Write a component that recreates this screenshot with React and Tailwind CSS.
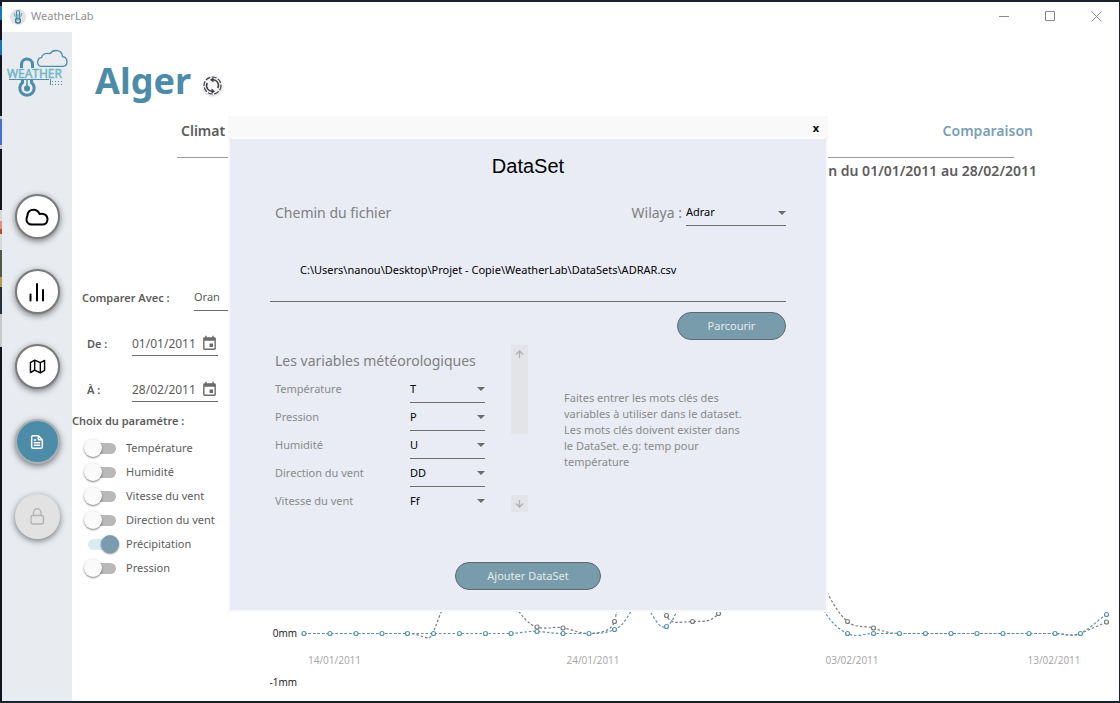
import React from "react";
import { MdEvent } from "react-icons/md";

function Caret({ className = "" }) {
  return (
    <svg viewBox="0 0 8 4" className={"pointer-events-none absolute right-0 h-1 w-2 fill-[#6b6b6b] " + className} aria-hidden="true">
      <path d="M0 0h8L4 4z" />
    </svg>
  );
}

function ThermoLogo() {
  return (
    <svg viewBox="0 0 62 50" className="h-[50px] w-[62px]" role="img" aria-label="WeatherLab">
      <g fill="none" stroke="#4d8ca9" strokeWidth="3">
        <path d="M15.500 20v-3.500a5.500 5.500 0 0 1 11 0V20" />
        <path d="M16.500 32v2.500a7.200 7.200 0 1 0 9 0V32" />
        <circle cx="21" cy="40.500" r="3" fill="#4d8ca9" stroke="none" />
        <path d="M21 32v8" strokeWidth="1.500" />
      </g>
      <path
        d="M35 18.300A4 4 0 0 1 32 12.500C32.500 10.500 34 9.700 35.500 9.700C36 6.500 39.500 4.500 44 5.600 47.500.8 56 1.500 56.500 8.600 62.500 9.500 62 17.500 57.500 18.300z"
        fill="none"
        stroke="#4d8ca9"
        strokeWidth="1.300"
      />
      <text x="1" y="30" fontSize="12" fontFamily="Open Sans, sans-serif" fill="#6fb7c7" stroke="#6fb7c7" strokeWidth=".5">
        WEATHER
      </text>
      <path d="M3 31.500h40" stroke="#4d8ca9" strokeWidth="1" />
      <path d="M44.500 31v6" stroke="#4d8ca9" strokeWidth="1" />
      <path d="M46 33.500h11M46 36.500h11" stroke="#4d8ca9" strokeWidth="1" strokeDasharray="1 2" />
    </svg>
  );
}

function TitleBar() {
  return (
    <header className="flex h-[30px] items-center bg-white pr-[17px] pb-px pl-2">
      <svg viewBox="0 0 16 16" className="size-4" aria-hidden="true">
        <circle cx="8" cy="8" r="8" fill="#e4e4e4" />
        <path d="M6.500 9.500V3a1.500 1.500 0 0 1 3 0v6.500" fill="none" stroke="#4d8ca9" strokeWidth="1.200" />
        <circle cx="8" cy="11.700" r="2.400" fill="none" stroke="#3d7f9e" strokeWidth="1.500" />
        <path d="M4.500 4v2.500L6.500 8M11.500 4v2.500L9.500 8M8 5v7" fill="none" stroke="#6fb7c7" strokeWidth="1.200" />
      </svg>
      <span className="ml-[5px] text-[11px] text-[#8f8f8f]">WeatherLab</span>
      <div className="ml-auto flex gap-[35px] text-[#8b8b8b]">
        <button aria-label="Réduire">
          <svg viewBox="0 0 11 11" className="size-[11px]"><path d="M0 5.500h10" stroke="currentColor" /></svg>
        </button>
        <button aria-label="Agrandir">
          <svg viewBox="0 0 11 11" className="size-[11px]"><path d="M.5.5h9v9h-9z" fill="none" stroke="currentColor" /></svg>
        </button>
        <button aria-label="Fermer la fenêtre">
          <svg viewBox="0 0 11 11" className="size-[11px]"><path d="M.5.5l10 10M10.500.5l-10 10" stroke="currentColor" /></svg>
        </button>
      </div>
    </header>
  );
}

const navBase = "flex size-[45px] items-center justify-center rounded-full border-2 shadow-[0_2px_6px_rgba(0,0,0,0.5)] ";
const navWhite = navBase + "border-[#7a7a7a] bg-white text-black";

function Sidebar() {
  const s = { fill: "none", stroke: "currentColor", strokeLinecap: "round", strokeLinejoin: "round" };
  return (
    <nav className="flex w-[70px] shrink-0 flex-col items-center bg-[#e8ebf0] pt-4">
      <ThermoLogo />
      <div className="mt-24 flex flex-col items-center gap-[30px]">
        <button className={navWhite} aria-label="Climat">
          <svg viewBox="0 0 24 18" className="h-[18px] w-6" {...s} strokeWidth="2">
            <path d="M7 16.500C3.500 16.500 1.500 14 1.500 11.500c0-2 .5-3 1-4C2.500 4 5 1.800 8.500 1.800c3 0 5 1.700 6 4.200 4-1.200 8 1 8 5.200 0 3-2 5.300-5 5.300z" />
          </svg>
        </button>
        <button className={navWhite} aria-label="Statistiques">
          <svg viewBox="0 0 24 24" className="size-6" {...s} strokeWidth="2">
            <path d="M5.500 20.500v-6M12 20.500V4M18 20.500V10" />
          </svg>
        </button>
        <button className={navWhite} aria-label="Carte">
          <svg viewBox="0 0 24 24" className="size-[17px]" {...s} strokeWidth="2">
            <path d="M2 6.500v14l6-3.500 8 4 6-3.500v-14L16 6.500 8 3zM8 3v14M16 6.500V21" />
          </svg>
        </button>
        <button className={navBase + "border-[#a9b1b5] bg-[#4d8ca9] text-white"} aria-label="Fichier">
          <svg viewBox="0 0 24 24" className="size-4" {...s} strokeWidth="2.200">
            <path d="M14 2.500H6a2 2 0 0 0-2 2v15a2 2 0 0 0 2 2h12a2 2 0 0 0 2-2V8.500zM14 2.500v6h6M8 9h2M8 13h8M8 17h8" />
          </svg>
        </button>
        <button className={navBase + "border-[#e2e2e2] bg-[#e2e2e2] text-[#b3b3b3]"} aria-label="Verrouillé" disabled>
          <svg viewBox="0 0 18 20" className="h-5 w-[18px]" {...s} strokeWidth="1.300">
            <rect x="3" y="8.500" width="12.500" height="8.500" rx="2" />
            <path d="M5.500 8.500V5.500a3.700 3.700 0 0 1 7.500 0v3" />
          </svg>
        </button>
      </div>
    </nav>
  );
}

function DateRow({ id, label, value }) {
  return (
    <div className="flex h-[46px] items-center pl-[15px]">
      <label htmlFor={id} className="w-[45px] text-[11px] font-semibold text-[#5c5c5c]">{label}</label>
      <div className="flex h-[23px] w-[86px] items-center border-b border-[#6f6f6f]">
        <input id={id} defaultValue={value} className="min-w-0 flex-1 bg-transparent text-xs text-[#5c5c5c] outline-none" />
        <button aria-label="Ouvrir le calendrier"><MdEvent className="size-[17px] text-[#6b6b6b]" /></button>
      </div>
    </div>
  );
}

const PARAMS = [
  ["Température", false],
  ["Humidité", false],
  ["Vitesse du vent", false],
  ["Direction du vent", false],
  ["Précipitation", true],
  ["Pression", false],
];

function Controls() {
  return (
    <section className="w-[198px] shrink-0 pt-[92px]">
      <div className="flex h-[46px] items-center pl-2.5">
        <label htmlFor="city" className="w-28 text-[11px] font-semibold text-[#5c5c5c]">Comparer Avec :</label>
        <div className="relative flex h-[26px] w-[76px] items-center border-b border-[#6f6f6f]">
          <select id="city" className="w-full appearance-none bg-transparent text-[11px] text-[#5c5c5c] outline-none">
            <option>Oran</option>
          </select>
          <Caret />
        </div>
      </div>
      <DateRow id="from" label="De :" value="01/01/2011" />
      <DateRow id="to" label="À :" value="28/02/2011" />
      <h2 className="text-[11px]/4 font-semibold text-[#5c5c5c]">Choix du paramétre :</h2>
      <div className="mt-[7px]">
        {PARAMS.map(([name, on]) => (
          <label key={name} className="flex h-6 items-center gap-2.5 pl-4 text-[11px] text-[#5c5c5c]">
            <input
              type="checkbox"
              defaultChecked={on}
              className="relative h-[11px] w-7 appearance-none rounded-full bg-[#b9b9b9] before:absolute before:-top-1 before:-left-1 before:size-[18px] before:rounded-full before:bg-[#fafafa] before:shadow-[0_1px_2px_rgba(0,0,0,0.5)] checked:bg-[#d9ecf0] checked:before:left-[13px] checked:before:bg-[#7a9cae]"
            />
            {name}
          </label>
        ))}
      </div>
    </section>
  );
}

const BLUE_POINTS = [
  [304, 633.5], [330, 633.5], [356, 633.5], [382, 633.5], [407.500, 633.5], [433.500, 633.5], [459.500, 633.5], [485.500, 633.5],
  [511, 633.5], [537, 631.5], [563, 633.5], [589, 633.5], [614.500, 629.5], [666.500, 626.5], [847.500, 633.5], [873.500, 633.5],
  [899.500, 633.5], [925.500, 633.5], [951, 633.5], [977, 633.5], [1003, 633.5], [1029, 633.5], [1055, 633.5], [1080.500, 633.5], [1106.500, 614.5],
];
const GRAY_POINTS = [
  [537, 627], [563, 628], [614.500, 621.5], [666.500, 615.5], [692.500, 621.5], [718.500, 613.5], [847.500, 621.5], [873.500, 628], [1106.500, 622],
];

function Chart() {
  return (
    <svg viewBox="270 183 849 513" className="block w-full min-w-0 flex-1 self-start" role="img" aria-label="Précipitations">
      <g fill="none" strokeWidth="1.200" strokeDasharray="2.500 2">
        <path
          stroke="#7b7b7b"
          d="M304 633.5H407.500C416 633 424 638 429 638C433 637 437 620 444 606C460 560 500 560 512 600C519 613 528 625 537 627C546 630 554 626 563 628C572 629 580 634 589 633.5C600 633 611 632 614.500 621.5C618 608 625 560 640 560C655 560 655 600 666.500 615.5C672 626 680 621.5 692.500 621.5C705 621 710 623 718.500 613.5C740 580 760 480 780 480C800 480 815 560 827 592C834 606 840 615 847.500 621.5C856 629 864 625 873.500 628C882 631 890 633.500 899.500 633.500H1055C1064 633.500 1071 637 1080.500 633.5C1090 629 1098 626 1106.500 622"
        />
        <path
          stroke="#5b93b0"
          d="M304 633.5H511C520 633 528 631 537 631.500C546 632 554 633.500 563 633.500H589C600 633.500 606 633 614.500 629.500C622 627 626 619 630 613C636 604 645 604 651 613C655 619 660 630 666.500 626.5C672 623 674 617 677 611C695 560 800 560 825 612C831 623 840 630 847.500 633.500C856 638 864 633.500 873.500 633.500H1055C1064 633.500 1071 637 1080.500 633.500C1092 627 1098 620 1106.500 614.500"
        />
      </g>
      <g fill="#fff" strokeWidth="1.200">
        {GRAY_POINTS.map(([x, y]) => <circle key={x} cx={x} cy={y} r="2" stroke="#7b7b7b" />)}
        {BLUE_POINTS.map(([x, y]) => <circle key={x} cx={x} cy={y} r="2" stroke="#5b93b0" />)}
      </g>
      <g fontSize="10" fontFamily="Open Sans, sans-serif" fill="#111" textAnchor="end">
        <text x="297" y="637">0mm</text>
        <text x="297" y="686">-1mm</text>
      </g>
      <g fontSize="10" fontFamily="Open Sans, sans-serif" fill="#a3a3a3" textAnchor="middle">
        <text x="334.500" y="664">14/01/2011</text>
        <text x="593" y="664">24/01/2011</text>
        <text x="852" y="664">03/02/2011</text>
        <text x="1054" y="664">13/02/2011</text>
      </g>
    </svg>
  );
}

const VARIABLES = [
  ["Température", "T"],
  ["Pression", "P"],
  ["Humidité", "U"],
  ["Direction du vent", "DD"],
  ["Vitesse du vent", "Ff"],
];

function Arrow({ down }) {
  return (
    <svg viewBox="0 0 9 9" className="size-[9px]" fill="none" stroke="#b0b0b0" strokeWidth="1.300" aria-hidden="true">
      <path d={down ? "M4.500 1v7M1 4.500 4.500 8 8 4.500" : "M4.500 8V1M1 4.500 4.500 1 8 4.500"} />
    </svg>
  );
}

function DatasetDialog() {
  return (
    <section
      role="dialog"
      aria-labelledby="dataset-title"
      className="absolute top-[114px] left-[226px] w-[600px] border-2 border-t-0 border-[#f9f9f9] bg-[#e9ecf5] pb-5"
    >
      <div className="flex h-[23px] items-center justify-end bg-[#f9f9f9] pr-[7px]">
        <button aria-label="Fermer" className="text-[11px]/4 font-bold text-black">x</button>
      </div>
      <h1 id="dataset-title" className="pt-[15px] text-center font-['Liberation_Sans',sans-serif] text-xl/6 text-black">DataSet</h1>
      <div className="pr-10 pl-[45px]">
        <div className="mt-[23px] flex h-6 items-center justify-between">
          <label htmlFor="path" className="text-sm text-[#808080]">Chemin du fichier</label>
          <div className="flex items-center gap-1">
            <label htmlFor="wilaya" className="text-sm text-[#808080]">Wilaya :</label>
            <div className="relative flex h-[26px] w-[100px] items-center border-b border-[#6f6f6f]">
              <select id="wilaya" className="w-full appearance-none bg-transparent text-[11px] text-black outline-none">
                <option>Adrar</option>
              </select>
              <Caret className="top-[11px]" />
            </div>
          </div>
        </div>
        <input
          id="path"
          defaultValue="C:\Users\nanou\Desktop\Projet - Copie\WeatherLab\DataSets\ADRAR.csv"
          className="mt-3 -ml-[5px] block h-[65px] w-[516px] border-b border-[#6f6f6f] bg-transparent pl-[30px] text-[11px] text-black outline-none"
        />
        <div className="mt-2.5 flex justify-end">
          <button className="h-7 w-[109px] rounded-full border border-[#5f6a70] bg-[#789cab] text-[11px] text-[#e4e9ec]">Parcourir</button>
        </div>
        <div className="mt-[5px] flex h-[167px]">
          <div className="w-[210px]">
            <h2 className="pt-1 text-sm/6 whitespace-nowrap text-[#808080]">Les variables météorologiques</h2>
            <div className="mt-0.5">
              {VARIABLES.map(([name, key], i) => (
                <div key={name} className="flex h-7 items-center">
                  <label htmlFor={"var-" + i} className="w-[135px] text-[11px] text-[#8a8a8a]">{name}</label>
                  <div className={"relative flex h-7 w-[75px] items-center pt-px " + (i < 4 ? "border-b border-[#6f6f6f]" : "")}>
                    <select id={"var-" + i} className="w-full appearance-none bg-transparent text-[11px] text-black outline-none">
                      <option>{key}</option>
                    </select>
                    <Caret className="top-3" />
                  </div>
                </div>
              ))}
            </div>
          </div>
          <div className="ml-[26px] flex w-[17px] flex-col justify-between">
            <button aria-label="Défiler vers le haut" className="flex h-[89px] justify-center bg-[#e3e4e7] pt-[5px]"><Arrow /></button>
            <button aria-label="Défiler vers le bas" className="flex h-[17px] items-center justify-center bg-[#e3e4e7]"><Arrow down /></button>
          </div>
          <p className="mt-[45px] ml-9 text-[11px]/4 text-[#8a8a8a]">
            Faites entrer les mots clés des
            <br />variables à utiliser dans le dataset.
            <br />Les mots clés doivent exister dans
            <br />le DataSet. e.g: temp pour
            <br />température
          </p>
        </div>
      </div>
      <div className="mt-[50px] flex justify-center">
        <button className="h-7 w-[146px] rounded-full border border-[#5f6a70] bg-[#789cab] text-[11px] text-[#e4e9ec]">Ajouter DataSet</button>
      </div>
    </section>
  );
}

export default function App() {
  return (
    <div className="flex min-h-screen bg-[#1a2230] pt-0.5 pr-px pb-0.5 font-['Noto_Sans',sans-serif]">
      <div className="w-0.5 shrink-0 bg-[linear-gradient(to_bottom,#10151f_4px,#1378c0_4px_18px,#10151f_18px_38px,#1378c0_38px_53px,#10151f_53px_114px,#ccc_114px_117px,#4a6bd0_117px_143px,#ccc_143px_147px,#10151f_147px_208px,#d8d8d8_208px_219px,#e09080_219px_227px,#c0482c_227px_232px,#d8d8d8_232px_248px,#4c5a48_248px_275px,#b09a50_275px_285px,#26303a_285px_312px,#c8c8c8_312px_345px,#10151f_345px)]" />
      <div className="relative flex min-w-0 flex-1 flex-col bg-white">
        <TitleBar />
        <div className="flex flex-1">
          <Sidebar />
          <main className="min-w-0 flex-1">
            <div className="flex items-center gap-3 pt-[21px] pl-[23px]">
              <h1 className="text-4xl/[56px] font-bold text-[#4d8ca9]">Alger</h1>
              <button aria-label="Actualiser" className="mt-2 rounded-full bg-[#f6f6f6] shadow-[0_1px_3px_rgba(0,0,0,0.2)]">
                <svg viewBox="0 0 19 19" className="size-[19px]" fill="none" stroke="#3f3c48">
                  <circle cx="9.500" cy="9.500" r="8.500" strokeWidth="1.200" strokeDasharray="5 1.500" />
                  <path d="M9 3.800a5.500 5.500 0 0 1 5.700 8.200M10 15.200A5.500 5.500 0 0 1 4.300 7" strokeWidth="1.500" />
                  <path d="M10.500 1.200 7 3.800l3.500 2.800zM8.500 17.800l3.500-2.600-3.500-2.800z" fill="#3f3c48" stroke="none" />
                </svg>
              </button>
            </div>
            <div className="mx-[105px] mt-2.5 flex justify-between border-b border-[#9a9a9a] pb-3.5 pl-1 text-sm/6 font-semibold">
              <a href="#climat" className="text-[#5c5c5c]">Climat</a>
              <a href="#comparaison" className="-mr-[19px] text-[#7a9fb5]">Comparaison</a>
            </div>
            <p className="mt-px pr-[82px] text-right text-sm/6 font-semibold text-[#5c5c5c]">Alger et Oran du 01/01/2011 au 28/02/2011</p>
            <div className="flex">
              <Controls />
              <Chart />
            </div>
          </main>
        </div>
        <DatasetDialog />
      </div>
    </div>
  );
}
